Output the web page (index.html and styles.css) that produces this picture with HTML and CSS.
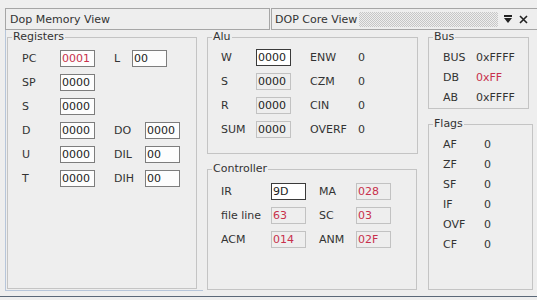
FILE: index.html
```html
<!DOCTYPE html>
<html lang="en">
<head>
    <meta charset="UTF-8">
    <title>DOP Views</title>
    <link rel="stylesheet" href="styles.css">
</head>
<body>
    <div class="top-strip"></div>

    <!-- View title bars -->
    <div class="tabs">
        <div class="tab tab-memory">Dop Memory View</div>
        <div class="tab tab-core">
            <span>DOP Core View</span>
            <span class="grip"></span>
            <svg class="icon icon-menu" width="8" height="8" viewBox="0 0 8 8">
                <rect x="0" y="0" width="8" height="2" fill="#222"/>
                <polygon points="0,3 8,3 4,8" fill="#222"/>
            </svg>
            <svg class="icon icon-close" width="9" height="9" viewBox="0 0 9 9">
                <path d="M1 1 L8 8 M8 1 L1 8" stroke="#222" stroke-width="1.6"/>
            </svg>
        </div>
    </div>

    <div class="content">
        <!-- Memory view -->
        <div class="panel-memory">
            <fieldset class="group registers">
                <legend>Registers</legend>
                <div class="row">
                    <span class="lbl">PC</span><span class="field red">0001</span>
                    <span class="lbl2 narrow">L</span><span class="field">00</span>
                </div>
                <div class="row">
                    <span class="lbl">SP</span><span class="field">0000</span>
                </div>
                <div class="row">
                    <span class="lbl">S</span><span class="field">0000</span>
                </div>
                <div class="row">
                    <span class="lbl">D</span><span class="field">0000</span>
                    <span class="lbl2">DO</span><span class="field">0000</span>
                </div>
                <div class="row">
                    <span class="lbl">U</span><span class="field">0000</span>
                    <span class="lbl2">DIL</span><span class="field">00</span>
                </div>
                <div class="row">
                    <span class="lbl">T</span><span class="field">0000</span>
                    <span class="lbl2">DIH</span><span class="field">00</span>
                </div>
            </fieldset>
        </div>

        <!-- Core view -->
        <div class="panel-core">
            <div class="col-mid">
                <fieldset class="group alu">
                    <legend>Alu</legend>
                    <div class="row">
                        <span class="lbl">W</span><span class="field focus">0000</span>
                        <span class="lbl2">ENW</span><span>0</span>
                    </div>
                    <div class="row">
                        <span class="lbl">S</span><span class="field readonly">0000</span>
                        <span class="lbl2">CZM</span><span>0</span>
                    </div>
                    <div class="row">
                        <span class="lbl">R</span><span class="field readonly">0000</span>
                        <span class="lbl2">CIN</span><span>0</span>
                    </div>
                    <div class="row">
                        <span class="lbl">SUM</span><span class="field readonly">0000</span>
                        <span class="lbl2">OVERF</span><span>0</span>
                    </div>
                </fieldset>

                <fieldset class="group controller">
                    <legend>Controller</legend>
                    <div class="row">
                        <span class="lbl">IR</span><span class="field focus">9D</span>
                        <span class="lbl2">MA</span><span class="field readonly red">028</span>
                    </div>
                    <div class="row">
                        <span class="lbl">file line</span><span class="field readonly red">63</span>
                        <span class="lbl2">SC</span><span class="field readonly red">03</span>
                    </div>
                    <div class="row">
                        <span class="lbl">ACM</span><span class="field readonly red">014</span>
                        <span class="lbl2">ANM</span><span class="field readonly red">02F</span>
                    </div>
                </fieldset>
            </div>

            <div class="col-right">
                <fieldset class="group bus">
                    <legend>Bus</legend>
                    <div class="kv"><span class="key">BUS</span><span>0xFFFF</span></div>
                    <div class="kv"><span class="key">DB</span><span class="red">0xFF</span></div>
                    <div class="kv"><span class="key">AB</span><span>0xFFFF</span></div>
                </fieldset>

                <fieldset class="group flags">
                    <legend>Flags</legend>
                    <div class="kv"><span class="key">AF</span><span>0</span></div>
                    <div class="kv"><span class="key">ZF</span><span>0</span></div>
                    <div class="kv"><span class="key">SF</span><span>0</span></div>
                    <div class="kv"><span class="key">IF</span><span>0</span></div>
                    <div class="kv"><span class="key">OVF</span><span>0</span></div>
                    <div class="kv"><span class="key">CF</span><span>0</span></div>
                </fieldset>
            </div>
        </div>
    </div>

    <div class="bottom-line"></div>
</body>
</html>
```

FILE: styles.css
```css
/* Base */
body {
    margin: 0;
    width: 537px;
    height: 300px;
    overflow: hidden;
    background-color: #eeeeee;
    color: #333;
    font-family: "DejaVu Sans", sans-serif;
    font-size: 11px;
}

.top-strip {
    height: 8px;
    background-color: #efefef;
}

/* Title bars */
.tabs {
    display: flex;
    height: 22px;
}

.tab {
    box-sizing: border-box;
    height: 22px;
    border: 1px solid #a6a6a6;
    display: flex;
    align-items: center;
    background-color: #eeeeee;
}

.tab-memory {
    margin-left: 5px;
    width: 265px;
    padding-left: 4px;
}

.tab-core {
    margin-left: 1px;
    flex: 1;
    padding-left: 3px;
    border-right: none;
}

.grip {
    flex: 1;
    height: 15px;
    margin: 0 6px 0 2px;
    background: repeating-conic-gradient(#c6c6c6 0 25%, transparent 0 50%) 0 0 / 2px 2px;
}

.icon-menu {
    margin-right: 7px;
}

.icon-close {
    margin-right: 9px;
}

/* Main area */
.content {
    display: flex;
    height: 266px;
}

.panel-memory {
    box-sizing: border-box;
    margin-left: 5px;
    width: 198px;
    height: 261px;
    padding: 0 6px 1px 1px;
    border-left: 1px solid #b7c6da;
    border-bottom: 1px solid #b7c6da;
}

.panel-core {
    flex: 1;
    display: flex;
    padding-left: 4px;
}

.col-mid {
    width: 211px;
    display: flex;
    flex-direction: column;
    gap: 8px;
}

.col-right {
    margin-left: 10px;
    display: flex;
    flex-direction: column;
    gap: 8px;
}

/* Titled groups: --inset is the left padding of the rows */
.group {
    --inset: 14px;
    box-sizing: border-box;
    margin: 0;
    min-width: 0;
    padding: 0 0 0 var(--inset);
    border: 1px solid #c4c4c4;
}

.group legend {
    margin-left: calc(4px - var(--inset));
    padding: 0 1px;
    line-height: 14px;
}

.registers {
    width: 190px;
    height: 259px;
    padding-top: 6px;
}

.alu {
    --inset: 13px;
    width: 211px;
    height: 124px;
    padding-top: 5px;
}

.controller {
    --inset: 13px;
    width: 210px;
    height: 128px;
    padding-top: 7px;
}

.bus {
    width: 101px;
    height: 79px;
    padding-top: 3px;
}

.flags {
    width: 105px;
    height: 173px;
    padding-top: 3px;
}

/* Rows with fields */
.row {
    display: flex;
    align-items: center;
    height: 17px;
    margin-bottom: 7px;
}

.lbl {
    width: 38px;
}

.lbl2 {
    margin-left: 19px;
    width: 31px;
}

.lbl2.narrow {
    width: 18px;
}

.alu .lbl {
    width: 35px;
}

.alu .lbl2 {
    width: 48px;
}

.controller .lbl {
    width: 50px;
}

.controller .lbl2 {
    margin-left: 13px;
    width: 37px;
}

.field {
    box-sizing: border-box;
    width: 35px;
    height: 17px;
    padding-left: 1px;
    line-height: 15px;
    border: 1px solid #7d7d7d;
    background-color: #fdfdfd;
    color: #222;
}

.field.focus {
    border-color: #3a3a3a;
    background-color: #fff;
}

.field.readonly {
    border-color: #c2c2c2;
    background-color: #eeeeee;
}

.red,
.field.red {
    color: #c8304c;
}

/* Label / value lists */
.kv {
    display: flex;
    height: 20px;
    align-items: center;
}

.bus .key {
    width: 33px;
}

.flags .key {
    width: 41px;
}

.bottom-line {
    height: 1px;
    background-color: #5b6878;
}
```
